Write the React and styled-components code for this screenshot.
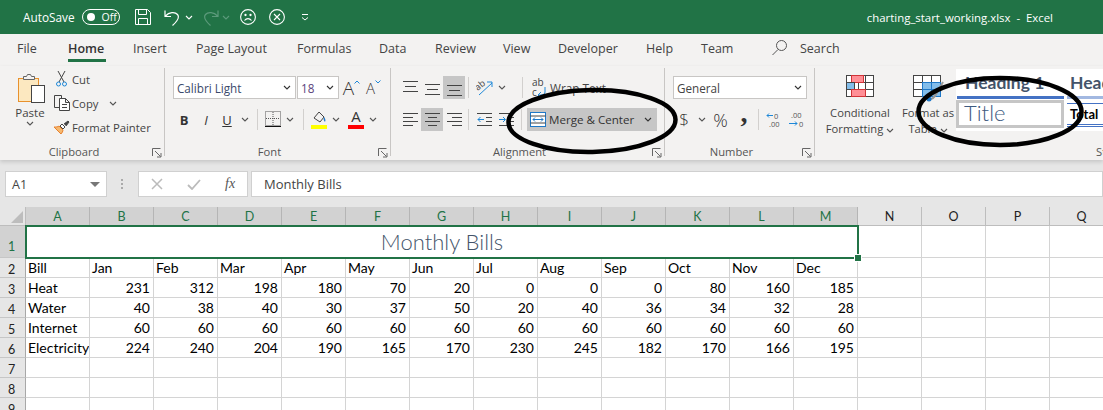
import React from 'react';
import styled, { createGlobalStyle } from 'styled-components';

const GREEN = '#217346';
const UI = '"Open Sans", "Noto Sans", sans-serif';
const CELL = 'Lato, "Noto Sans", sans-serif';

const Global = createGlobalStyle`
  html, body { margin: 0; padding: 0; width: 1103px; height: 410px; overflow: hidden; background: #e6e6e6; }
  * { box-sizing: border-box; }
`;

const Page = styled.div`
  position: relative;
  width: 1103px;
  height: 410px;
  overflow: hidden;
  font-family: ${UI};
  background: #e6e6e6;
`;

/* title bar */
const TitleBar = styled.div`
  height: 34px;
  background: ${GREEN};
  color: #fff;
  display: flex;
  align-items: center;
  padding-left: 23px;
  font-size: 11.8px;
`;
const Toggle = styled.div`
  width: 38px;
  height: 16px;
  margin-left: 7px;
  border: 1px solid #fff;
  border-radius: 8px;
  display: flex;
  align-items: center;
  padding-left: 4px;
  gap: 7px;
  font-size: 10.5px;
`;
const Knob = styled.span`
  width: 8px;
  height: 8px;
  border-radius: 50%;
  background: #fff;
`;
const QatSlot = styled.div`
  width: ${p => p.$w}px;
  margin-left: ${p => p.$ml || 0}px;
  display: flex;
  justify-content: center;
  flex: none;
`;
const DocName = styled.div`
  margin-left: auto;
  padding-right: 50px;
  white-space: pre;
  font-size: 11.4px;
`;

/* tabs */
const Tabs = styled.div`
  height: 32px;
  background: #f3f2f1;
  display: flex;
  padding-left: 17px;
  font-size: 12.5px;
  color: #444;
`;
const Tab = styled.div`
  width: ${p => p.$w}px;
  flex: none;
  padding-top: 6px;
  position: relative;
  font-weight: ${p => (p.$active ? 600 : 400)};
  ${p => p.$active && `
    color: #333;
    &::after {
      content: '';
      position: absolute;
      left: 0;
      top: 25px;
      width: 38px;
      height: 3px;
      background: ${GREEN};
    }
  `}
`;
const SearchTab = styled.div`
  display: flex;
  gap: 13px;
  padding-top: 6px;
`;

/* ribbon */
const Ribbon = styled.div`
  height: 94px;
  background: #f3f2f1;
  display: flex;
  box-shadow: 0 2px 4px rgba(0, 0, 0, 0.14);
  position: relative;
  overflow: hidden;
`;
const Group = styled.div`
  position: relative;
  width: ${p => p.$w}px;
  flex: none;
  height: 94px;
  padding: 10px 0 0 ${p => p.$pad || 0}px;
  &::after {
    content: '';
    position: absolute;
    right: 0;
    top: 2px;
    width: 1px;
    height: 88px;
    background: ${p => (p.$last ? 'transparent' : '#c8c6c4')};
  }
`;
const GroupLabel = styled.div`
  position: absolute;
  left: 0;
  right: 17px;
  top: 78px;
  text-align: center;
  font-size: 11.2px;
  color: #555;
  white-space: nowrap;
`;
const Launcher = styled.svg`
  position: absolute;
  right: 3px;
  top: 82px;
`;
const RowStack = styled.div`
  display: flex;
  flex-direction: column;
  gap: 9px;
`;
const Row = styled.div`
  height: 23px;
  display: flex;
  align-items: center;
`;
const Slot = styled.div`
  width: ${p => p.$w}px;
  height: 23px;
  margin-left: ${p => p.$ml || 0}px;
  flex: none;
  display: flex;
  align-items: center;
  justify-content: center;
  background: ${p => (p.$on ? '#c6c6c6' : 'transparent')};
  font-size: ${p => p.$size || 13}px;
  color: #333;
  font-weight: ${p => p.$weight || 400};
  font-style: ${p => (p.$italic ? 'italic' : 'normal')};
  font-family: ${p => (p.$serif ? '"Liberation Serif", serif' : 'inherit')};
  text-decoration: ${p => (p.$under ? 'underline' : 'none')};
`;
const Comma = styled(Slot)`
  padding-bottom: 14px;
`;
const ColorSlot = styled(Slot)`
  position: relative;
  align-items: flex-start;
  line-height: 17px;
  font-size: 15px;
  &::after {
    content: '';
    position: absolute;
    left: 0;
    top: 17px;
    width: 16px;
    height: 4px;
    background: #ff0000;
  }
`;
const Caret = styled.svg`
  margin-bottom: 12px;
`;
const Sep = styled.div`
  width: 1px;
  height: 21px;
  margin: 0 ${p => p.$r ?? 3}px 0 ${p => p.$l ?? 3}px;
  background: #d2d0ce;
  flex: none;
`;

/* clipboard */
const ClipWrap = styled.div`
  display: flex;
  padding-left: 15px;
`;
const PasteCol = styled.div`
  width: 30px;
  display: flex;
  flex-direction: column;
  align-items: center;
  font-size: 11.5px;
  color: #444;
  margin-top: -4px;
`;
const PasteLabel = styled.div`
  margin-top: 2px;
  line-height: 16px;
`;
const ClipList = styled.div`
  margin-left: 8px;
  margin-top: -6px;
  display: flex;
  flex-direction: column;
  gap: 6px;
`;
const ClipItem = styled.div`
  height: 18px;
  display: flex;
  align-items: center;
  gap: 2px;
  font-size: 11.3px;
  color: #444;
  white-space: nowrap;
`;
const ClipIcon = styled.div`
  width: 17px;
  display: flex;
  justify-content: center;
  flex: none;
`;
const ChevGap = styled.span`
  display: flex;
  margin-left: ${p => p.$ml}px;
`;

/* selects */
const SelectBox = styled.div`
  width: ${p => p.$w}px;
  height: 23px;
  flex: none;
  background: #fff;
  border: 1px solid #c8c6c4;
  margin-left: ${p => p.$ml || 0}px;
  display: flex;
  align-items: center;
  justify-content: space-between;
  padding: 0 4px 0 3px;
  font-size: 11.7px;
  color: ${p => p.$color || '#444'};
  white-space: nowrap;
`;

const MergeBtn = styled.div`
  width: 130px;
  height: 23px;
  margin-left: 5px;
  background: #c6c6c6;
  display: flex;
  align-items: center;
  padding-left: 3px;
  gap: 3px;
  font-size: 11.6px;
  color: #333;
  flex: none;
  white-space: nowrap;
`;
const WrapBtn = styled.div`
  display: flex;
  align-items: center;
  margin-left: 9px;
  gap: 3px;
  font-size: 11.8px;
  color: #444;
  white-space: nowrap;
`;

/* styles */
const StylesWrap = styled.div`
  display: flex;
  padding-left: 10px;
  margin-top: -1px;
`;
const BigBtn = styled.div`
  width: ${p => p.$w}px;
  margin-right: ${p => p.$mr || 0}px;
  flex: none;
  display: flex;
  flex-direction: column;
  align-items: center;
  font-size: 11.2px;
  line-height: 16px;
  color: #444;
  text-align: center;
  white-space: nowrap;
`;
const BigText = styled.div`
  margin-top: ${p => p.$mt}px;
`;
const Gallery = styled.div`
  margin-top: -6px;
  width: 147px;
  height: 62px;
  background: #fff;
  flex: none;
  display: grid;
  grid-template-columns: 107px 60px;
  grid-template-rows: 30px 28px;
  gap: 1px 3px;
  overflow: hidden;
  padding-left: 1px;
`;
const HeadingCell = styled.div`
  font-family: ${CELL};
  font-weight: 700;
  font-size: 17.5px;
  color: #44546a;
  padding: 4px 0 0 ${p => p.$pad}px;
  line-height: 20px;
  border-bottom: 3px solid ${p => p.$c};
  white-space: nowrap;
  overflow: hidden;
`;
const TitleCell = styled.div`
  border: 3px solid #c6c6c6;
  font-family: ${CELL};
  font-weight: 300;
  font-size: 22px;
  line-height: 20px;
  color: #3d5a80;
  padding-left: 5px;
  margin-left: -1px;
`;
const TotalCell = styled.div`
  font-family: ${CELL};
  font-weight: 700;
  font-size: 13px;
  color: #000;
  margin-top: 3px;
  padding: 2px 0 0 3px;
  border-top: 1px solid #4472c4;
  border-bottom: 3px double #4472c4;
  height: 24px;
  white-space: nowrap;
`;
const StylesCut = styled.div`
  position: absolute;
  left: 281px;
  top: 78px;
  font-size: 11.2px;
  color: #555;
`;

/* formula bar */
const FormulaBar = styled.div`
  height: 47px;
  padding: 11px 0 10px 5px;
  display: flex;
  align-items: stretch;
  background: #e6e6e6;
`;
const NameBox = styled.div`
  width: 102px;
  background: #fff;
  border: 1px solid #d0d0d0;
  padding: 0 6px;
  display: flex;
  align-items: center;
  justify-content: space-between;
  font-size: 12.5px;
  color: #444;
`;
const Grip = styled.div`
  width: 31px;
  display: flex;
  align-items: center;
  justify-content: center;
`;
const FxBox = styled.div`
  width: 110px;
  background: #fff;
  border: 1px solid #d0d0d0;
  display: flex;
  align-items: center;
  padding-left: 12px;
  gap: 24px;
`;
const FxMark = styled.span`
  font-family: "Liberation Serif", serif;
  font-style: italic;
  font-size: 14px;
  color: #555;
`;
const FormulaInput = styled.div`
  flex: 1;
  margin-left: 3px;
  background: #fff;
  border: 1px solid #d0d0d0;
  padding-left: 12px;
  display: flex;
  align-items: center;
  font-size: 13px;
  color: #444;
`;

/* sheet */
const Sheet = styled.div`
  display: grid;
  grid-template-columns: 26px repeat(17, 64px);
  grid-template-rows: 19px 32px repeat(8, 20px);
  font-family: ${CELL};
  font-size: 14px;
  color: #000;
  background: #fff;
`;
const Corner = styled.div`
  background: #e6e6e6;
  border-right: 1px solid #bdbdbd;
  border-bottom: 1px solid #bdbdbd;
  position: relative;
  overflow: hidden;
  &::after {
    content: '';
    position: absolute;
    right: 2px;
    bottom: 2px;
    width: 0;
    height: 0;
    border-left: 12px solid transparent;
    border-bottom: 12px solid #bdbdbd;
  }
`;
const ColHead = styled.div`
  background: ${p => (p.$sel ? '#d2d2d2' : '#e6e6e6')};
  color: ${p => (p.$sel ? GREEN : '#222')};
  border-right: 1px solid ${p => (p.$sel ? '#b5b5b5' : '#bdbdbd')};
  border-bottom: 1px solid ${p => (p.$sel ? GREEN : '#bdbdbd')};
  display: flex;
  align-items: center;
  justify-content: center;
  font-size: 12.5px;
`;
const RowHead = styled.div`
  background: ${p => (p.$sel ? '#d2d2d2' : '#e6e6e6')};
  color: ${p => (p.$sel ? GREEN : '#222')};
  border-right: 1px solid #a8a8a8;
  border-bottom: 1px solid #c6c6c6;
  display: flex;
  align-items: flex-end;
  justify-content: center;
  font-size: 12.5px;
  padding-bottom: ${p => (p.$sel ? 3 : 0)}px;
  padding-right: 2px;
`;
const Cell = styled.div`
  border-right: 1px solid #d4d4d4;
  border-bottom: 1px solid #d4d4d4;
  padding: 0 3px 0 2px;
  text-align: ${p => (p.$num ? 'right' : 'left')};
  line-height: 20px;
  white-space: nowrap;
  overflow: hidden;
`;
const MergedCell = styled.div`
  grid-column: span 13;
  position: relative;
  border: 2px solid ${GREEN};
  margin: -1px;
  text-align: center;
  font-family: ${CELL};
  font-weight: 300;
  font-size: 22px;
  line-height: 29px;
  color: #44546a;
  background: #fff;
  z-index: 1;
  &::after {
    content: '';
    position: absolute;
    right: -4px;
    bottom: -4px;
    width: 6px;
    height: 6px;
    background: ${GREEN};
    border: 1px solid #fff;
    box-sizing: content-box;
    margin: -1px;
  }
`;

/* hand drawn marks over the screenshot */
const Circled = styled.svg`
  position: absolute;
  left: ${p => p.$x}px;
  top: ${p => p.$y}px;
  pointer-events: none;
  z-index: 3;
`;

const Chev = ({ c = '#555' }) => (
  <svg width="8" height="5" viewBox="0 0 8 5" fill="none"><path d="M1 1l3 3 3-3" stroke={c} strokeWidth="1.1" /></svg>
);

const Launch = () => (
  <Launcher width="10" height="10" viewBox="0 0 10 10" fill="none" stroke="#666">
    <path d="M.5 8V.5H8.500" />
    <path d="M3 3l5.500 5.500M9 5v4H5" />
  </Launcher>
);

const Lines = ({ rows }) => (
  <svg width="15" height="17" viewBox="0 0 15 17" stroke="#444" strokeWidth="1">
    {rows.map(([a, b, y]) => <line key={y} x1={a} x2={b} y1={y + 0.5} y2={y + 0.5} />)}
  </svg>
);

const Indent = ({ out }) => (
  <svg width="15" height="13" viewBox="0 0 15 13" fill="none">
    <path d="M0 .5h15M0 12.500h15M9 4.500h6M9 8.500h6" stroke="#444" />
    <path d={out ? 'M7 6.500H1M3.500 4L1 6.500 3.500 9' : 'M0 6.500h6M4 4l2.500 2.500L4 9'} stroke="#1e88d8" />
  </svg>
);

const CondIcon = () => (
  <svg width="28" height="23" viewBox="0 0 28 23" fill="#fff" stroke="#444">
    <rect x=".5" y=".5" width="27" height="21" />
    <path d="M5.500.5v7M5.500 14.500v7M12.500 7.500v7M19.500.5v21M.5 7.500h27M.5 14.500h27" fill="none" />
    <rect x="5.500" y=".5" width="12" height="7" fill="#ff8f96" stroke="#d13438" />
    <rect x=".5" y="7.500" width="8" height="7" fill="#83bdea" stroke="#444" />
    <rect x="5.500" y="14.500" width="14" height="7" fill="#ff8f96" stroke="#d13438" />
  </svg>
);

const TableIcon = () => (
  <svg width="31" height="27" viewBox="0 0 31 27" fill="none" stroke="#444">
    <rect x=".5" y=".5" width="27" height="21" fill="#fff" />
    <path d="M9.500.5v21M18.500.5v21M.5 7.500h27M.5 14.500h27" />
    <rect x="9.500" y="7.500" width="18" height="14" fill="#83bdea" stroke="#1e78c8" />
    <path d="M18.500 7.500v14M9.500 14.500h18" stroke="#1e78c8" />
    <path d="M18 24c4-1 5-5 12-17" stroke="#999" strokeWidth="2" />
    <circle cx="16" cy="24" r="2.500" fill="#1e78c8" stroke="none" />
  </svg>
);

const COLS = ['A', 'B', 'C', 'D', 'E', 'F', 'G', 'H', 'I', 'J', 'K', 'L', 'M', 'N', 'O', 'P', 'Q'];
const DATA = [
  ['Bill', 'Jan', 'Feb', 'Mar', 'Apr', 'May', 'Jun', 'Jul', 'Aug', 'Sep', 'Oct', 'Nov', 'Dec'],
  ['Heat', 231, 312, 198, 180, 70, 20, 0, 0, 0, 80, 160, 185],
  ['Water', 40, 38, 40, 30, 37, 50, 20, 40, 36, 34, 32, 28],
  ['Internet', 60, 60, 60, 60, 60, 60, 60, 60, 60, 60, 60, 60],
  ['Electricity', 224, 240, 204, 190, 165, 170, 230, 245, 182, 170, 166, 195],
  [], [], [], [],
];

const TABS = [
  ['File', 51], ['Home', 65, true], ['Insert', 63], ['Page Layout', 101], ['Formulas', 82], ['Data', 56],
  ['Review', 68], ['View', 55], ['Developer', 88], ['Help', 55], ['Team', 71],
];

export default function App() {
  return (
    <Page>
      <Global />
      <TitleBar>
        AutoSave
        <Toggle><Knob />Off</Toggle>
        <QatSlot $w={16} $ml={15}>
          <svg width="16" height="16" viewBox="0 0 16 16" fill="none" stroke="#fff">
            <path d="M.5.5h12l3 3v12H.5z" />
            <path d="M3.500.5v5h8v-5M3.500 15.500v-6h9v6" />
          </svg>
        </QatSlot>
        <QatSlot $w={20} $ml={12}>
          <svg width="17" height="17" viewBox="0 0 17 17" fill="none" stroke="#fff" strokeWidth="1.2">
            <path d="M1 1.500v6h6M1.500 7C5 3 11 2.500 13.500 5.500c2.500 3-.5 7-5 11" />
          </svg>
        </QatSlot>
        <QatSlot $w={12}><Chev c="#fff" /></QatSlot>
        <QatSlot $w={20} $ml={6}>
          <svg width="17" height="17" viewBox="0 0 17 17" fill="none" stroke="#5c9a7b" strokeWidth="1.2">
            <path d="M16 1.500v6h-6M15.500 7C12 3 6 2.500 3.500 5.500c-2.500 3 .5 7 5 11" />
          </svg>
        </QatSlot>
        <QatSlot $w={10}><Chev c="#5c9a7b" /></QatSlot>
        <QatSlot $w={16} $ml={9}>
          <svg width="16" height="16" viewBox="0 0 16 16" fill="none" stroke="#fff" strokeWidth="1.1">
            <circle cx="8" cy="8" r="7.400" />
            <circle cx="5.500" cy="6" r=".6" fill="#fff" />
            <circle cx="10.500" cy="6" r=".6" fill="#fff" />
            <path d="M4.500 11.500c2-2.500 5-2.500 7 0" />
          </svg>
        </QatSlot>
        <QatSlot $w={16} $ml={13}>
          <svg width="16" height="16" viewBox="0 0 16 16" fill="none" stroke="#fff" strokeWidth="1.1">
            <circle cx="8" cy="8" r="7.400" />
            <path d="M5 5l6 6M11 5l-6 6" />
          </svg>
        </QatSlot>
        <QatSlot $w={10} $ml={15}>
          <svg width="8" height="8" viewBox="0 0 8 8" fill="none" stroke="#fff">
            <path d="M1 1.500h6M1 4.500l3 2.500 3-2.500" />
          </svg>
        </QatSlot>
        <DocName>charting_start_working.xlsx  -  Excel</DocName>
      </TitleBar>

      <Tabs>
        {TABS.map(([t, w, a]) => <Tab key={t} $w={w} $active={a}>{t}</Tab>)}
        <SearchTab>
          <svg width="15" height="16" viewBox="0 0 15 16" fill="none" stroke="#555">
            <circle cx="9.500" cy="5.500" r="5" />
            <path d="M6 9.500L.5 15" />
          </svg>
          Search
        </SearchTab>
      </Tabs>

      <Ribbon>
        <Group $w={165}>
          <ClipWrap>
            <PasteCol>
              <svg width="30" height="31" viewBox="0 0 30 31" fill="none">
                <rect x="3.500" y="6.500" width="20" height="23" fill="#fce8c0" stroke="#e8912d" />
                <path d="M8.500 7.500v-3h3l1-2h3l1 2h3v3z" fill="#f3f2f1" stroke="#666" />
                <rect x="16.500" y="13.500" width="13" height="17" fill="#fff" stroke="#444" />
              </svg>
              <PasteLabel>Paste</PasteLabel>
              <Chev />
            </PasteCol>
            <ClipList>
              <ClipItem>
                <ClipIcon>
                  <svg width="11" height="16" viewBox="0 0 11 16" fill="none">
                    <path d="M2 0l6 11M9 0L3 11" stroke="#444" />
                    <circle cx="2.500" cy="13" r="2" stroke="#1e88d8" />
                    <circle cx="8.500" cy="13" r="2" stroke="#1e88d8" />
                  </svg>
                </ClipIcon>
                Cut
              </ClipItem>
              <ClipItem>
                <ClipIcon>
                  <svg width="16" height="16" viewBox="0 0 16 16" fill="none" stroke="#444">
                    <path d="M5.500 12.500h-5V.5h7v3" />
                    <path d="M5.500 3.500h6l4 4v8h-10zM11.500 3.500v4h4M8 9.500h5M8 12.500h5" fill="#fff" />
                  </svg>
                </ClipIcon>
                Copy
                <ChevGap $ml={9}><Chev /></ChevGap>
              </ClipItem>
              <ClipItem>
                <ClipIcon>
                  <svg width="17" height="15" viewBox="0 0 17 15" fill="none">
                    <path d="M1 7l7 7c1-1 2-3 2-4l-4-4c-1 1-3 1-5 1z" fill="#f5b870" stroke="#e8812d" />
                    <path d="M7 6l2-2 3 3-2 2z" fill="#fff" stroke="#444" />
                    <path d="M11 4l4-3 1 1-3 4" stroke="#444" fill="#444" />
                  </svg>
                </ClipIcon>
                Format Painter
              </ClipItem>
            </ClipList>
          </ClipWrap>
          <GroupLabel>Clipboard</GroupLabel>
          <Launch />
        </Group>

        <Group $w={226} $pad={8}>
          <RowStack>
            <Row>
              <SelectBox $w={123} $color="#3b4a6b">Calibri Light<Chev c="#333" /></SelectBox>
              <SelectBox $w={42} $ml={1} $color="#5a3f7b">18<Chev c="#333" /></SelectBox>
              <Slot $w={21} $ml={2} $size={19} $weight={300}>
                A<Caret width="6" height="4" viewBox="0 0 6 4" fill="none" stroke="#1e88d8"><path d="M.5 3.500L3 1l2.500 2.500" /></Caret>
              </Slot>
              <Slot $w={19} $ml={2} $size={15} $weight={300}>
                A<Caret width="6" height="4" viewBox="0 0 6 4" fill="none" stroke="#1e88d8"><path d="M.5.5L3 3 5.500.5" /></Caret>
              </Slot>
            </Row>
            <Row>
              <Slot $w={22} $size={13} $weight={700}>B</Slot>
              <Slot $w={22} $size={13} $italic>I</Slot>
              <Slot $w={20} $size={13} $under>U</Slot>
              <Slot $w={15}><Chev /></Slot>
              <Sep $l={5} $r={7} />
              <Slot $w={16}>
                <svg width="16" height="17" viewBox="0 0 16 17" fill="none">
                  <path d="M.5 .5h15v14H.5z" stroke="#555" strokeDasharray="1 1" />
                  <path d="M8 1v13M1 7.500h14" stroke="#555" strokeDasharray="1 1" />
                  <path d="M0 15.500h16" stroke="#111" />
                </svg>
              </Slot>
              <Slot $w={18}><Chev /></Slot>
              <Sep $l={4} $r={7} />
              <Slot $w={16}>
                <svg width="16" height="19" viewBox="0 0 16 19" fill="none">
                  <path d="M3 8l5-6 5 5-4 5z" stroke="#444" />
                  <path d="M13 7c1 1 2 3 1 5-1-1-2-3-1-5z" fill="#1e78c8" />
                  <rect y="15" width="16" height="4" fill="#ffff00" />
                </svg>
              </Slot>
              <Slot $w={18}><Chev /></Slot>
              <ColorSlot $w={16} $ml={3}>A</ColorSlot>
              <Slot $w={18}><Chev /></Slot>
            </Row>
          </RowStack>
          <GroupLabel>Font</GroupLabel>
          <Launch />
        </Group>

        <Group $w={274} $pad={8}>
          <RowStack>
            <Row>
              <Slot $w={22}><Lines rows={[[0, 15, 2], [2, 13, 7], [0, 15, 12]]} /></Slot>
              <Slot $w={22}><Lines rows={[[0, 15, 5], [2, 13, 10], [0, 15, 15]]} /></Slot>
              <Slot $w={22} $on><Lines rows={[[0, 15, 6], [2, 13, 11], [0, 15, 16]]} /></Slot>
              <Sep $l={3} $r={7} />
              <Slot $w={18}>
                <svg width="18" height="17" viewBox="0 0 18 17" fill="none">
                  <text x="0" y="9" fontSize="9" fill="#444" transform="rotate(-40 5 8)" fontFamily="Open Sans">ab</text>
                  <path d="M3 16L16 4M11 3h5v5" stroke="#1e88d8" />
                </svg>
              </Slot>
              <Slot $w={15}><Chev /></Slot>
              <Sep $l={13} $r={0} />
              <WrapBtn>
                <svg width="15" height="20" viewBox="0 0 15 20" fill="none">
                  <text x="0" y="8" fontSize="10" fill="#444" fontFamily="Open Sans">ab</text>
                  <text x="0" y="18" fontSize="10" fill="#444" fontFamily="Open Sans">c</text>
                  <path d="M13 9v5c0 3-4 3-6 3M9 14l-3 3 3 3" stroke="#1e88d8" />
                </svg>
                Wrap Text
              </WrapBtn>
            </Row>
            <Row>
              <Slot $w={22}><Lines rows={[[0, 15, 2], [0, 10, 6], [0, 15, 10], [0, 10, 14]]} /></Slot>
              <Slot $w={22} $on><Lines rows={[[0, 15, 2], [3, 12, 6], [0, 15, 10], [3, 12, 14]]} /></Slot>
              <Slot $w={22}><Lines rows={[[0, 15, 2], [5, 15, 6], [0, 15, 10], [5, 15, 14]]} /></Slot>
              <Sep $l={3} $r={8} />
              <Slot $w={15}><Indent out /></Slot>
              <Slot $w={22} $ml={3}><Indent /></Slot>
              <Sep $l={4} $r={0} />
              <MergeBtn>
                <svg width="16" height="15" viewBox="0 0 16 15" fill="#fff">
                  <rect x=".5" y=".5" width="15" height="14" stroke="#1e78c8" />
                  <path d="M.5 4h15M.5 11h15" stroke="#444" />
                  <path d="M3 7.500h10M5 5.500l-2 2 2 2M11 5.500l2 2-2 2" stroke="#1e78c8" fill="none" />
                </svg>
                Merge &amp; Center
                <ChevGap $ml={7}><Chev c="#333" /></ChevGap>
              </MergeBtn>
            </Row>
          </RowStack>
          <GroupLabel>Alignment</GroupLabel>
          <Launch />
        </Group>

        <Group $w={150} $pad={8}>
          <RowStack>
            <Row>
              <SelectBox $w={134}>General<Chev c="#333" /></SelectBox>
            </Row>
            <Row>
              <Slot $w={16} $ml={3} $size={17} $weight={300}>$</Slot>
              <Slot $w={11} $ml={4}><Chev /></Slot>
              <Slot $w={27} $size={18} $weight={300}>%</Slot>
              <Comma $w={14} $ml={3} $size={28} $weight={700} $serif>,</Comma>
              <Sep $l={7} $r={7} />
              <Slot $w={18}>
                <svg width="18" height="18" viewBox="0 0 18 18" fill="none">
                  <text x="8" y="8" fontSize="7.500" fill="#555" fontFamily="Open Sans">0</text>
                  <text x="3" y="16" fontSize="7.500" fill="#555" fontFamily="Open Sans">.00</text>
                  <path d="M7 4.500H1M3 2.500l-2 2 2 2" stroke="#1e88d8" />
                </svg>
              </Slot>
              <Slot $w={18} $ml={4}>
                <svg width="18" height="18" viewBox="0 0 18 18" fill="none">
                  <text x="3" y="7" fontSize="7.500" fill="#555" fontFamily="Open Sans">.00</text>
                  <text x="11" y="16" fontSize="7.500" fill="#555" fontFamily="Open Sans">0</text>
                  <path d="M1 12.500h8M7 10.500l2 2-2 2" stroke="#1e88d8" />
                </svg>
              </Slot>
            </Row>
          </RowStack>
          <GroupLabel>Number</GroupLabel>
          <Launch />
        </Group>

        <Group $w={288} $last>
          <StylesWrap>
            <BigBtn $w={70} $mr={5}>
              <CondIcon />
              <BigText $mt={7}>Conditional<br />Formatting <Chev /></BigText>
            </BigBtn>
            <BigBtn $w={56}>
              <TableIcon />
              <BigText $mt={3}>Format as<br />Table <Chev /></BigText>
            </BigBtn>
            <Gallery>
              <HeadingCell $c="#4472c4" $pad={8}>Heading 1</HeadingCell>
              <HeadingCell $c="#a2b8e1" $pad={3}>Heading 2</HeadingCell>
              <TitleCell>Title</TitleCell>
              <TotalCell>Total</TotalCell>
            </Gallery>
          </StylesWrap>
          <StylesCut>Styles</StylesCut>
        </Group>
      </Ribbon>

      <FormulaBar>
        <NameBox>
          A1
          <svg width="10" height="5" viewBox="0 0 10 5"><path d="M0 0h10L5 5z" fill="#777" /></svg>
        </NameBox>
        <Grip>
          <svg width="3" height="11" viewBox="0 0 3 11" fill="#aaa">
            <rect y="0" width="2" height="2" /><rect y="4" width="2" height="2" /><rect y="8" width="2" height="2" />
          </svg>
        </Grip>
        <FxBox>
          <svg width="12" height="12" viewBox="0 0 12 12" fill="none" stroke="#bbb" strokeWidth="1.500"><path d="M1 1l10 10M11 1L1 11" /></svg>
          <svg width="14" height="11" viewBox="0 0 14 11" fill="none" stroke="#bbb" strokeWidth="1.800"><path d="M1 6l4 4 8-9" /></svg>
          <FxMark>fx</FxMark>
        </FxBox>
        <FormulaInput>Monthly Bills</FormulaInput>
      </FormulaBar>

      <Sheet>
        <Corner />
        {COLS.map((c, i) => <ColHead key={c} $sel={i < 13}>{c}</ColHead>)}
        <RowHead $sel>1</RowHead>
        <MergedCell>Monthly Bills</MergedCell>
        {COLS.slice(13).map(c => <Cell key={c} />)}
        {DATA.map((row, r) => (
          <React.Fragment key={r}>
            <RowHead>{r + 2}</RowHead>
            {COLS.map((c, i) => (
              <Cell key={c} $num={typeof row[i] === 'number'}>{row[i]}</Cell>
            ))}
          </React.Fragment>
        ))}
      </Sheet>

      <Circled $x={505} $y={85} width="176" height="74" viewBox="0 0 176 74" fill="none">
        <ellipse cx="87" cy="36" rx="83.500" ry="31" stroke="#000" strokeWidth="4.500" transform="rotate(-1 87 36)" />
      </Circled>
      <Circled $x={913} $y={73} width="176" height="78" viewBox="0 0 176 78" fill="none">
        <ellipse cx="87" cy="38.500" rx="81.500" ry="33.500" stroke="#000" strokeWidth="4.500" />
      </Circled>
    </Page>
  );
}
